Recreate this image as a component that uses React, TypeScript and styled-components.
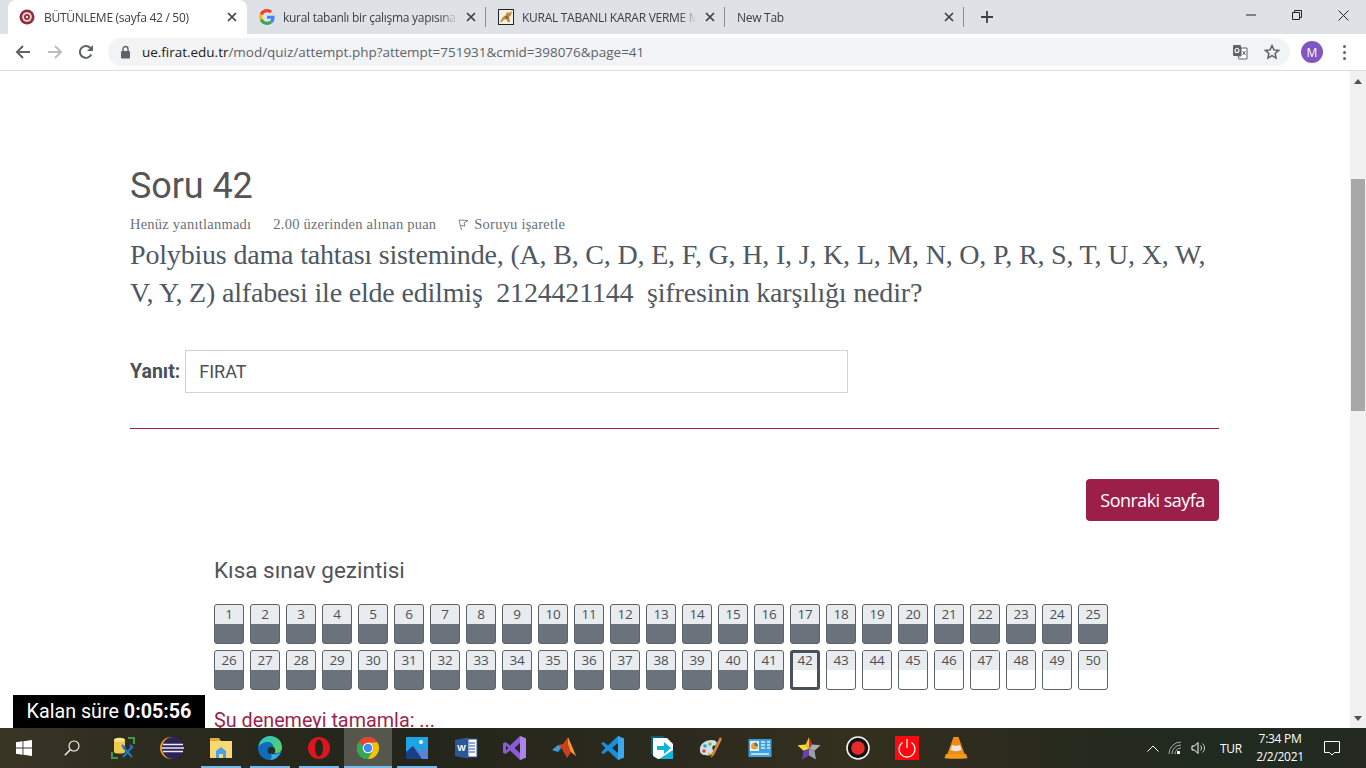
import React from "react";
import styled, { createGlobalStyle } from "styled-components";

const Global = createGlobalStyle`
  html, body { margin: 0; padding: 0; overflow: hidden; background: #fff; }
  * { box-sizing: border-box; }
`;

const Screen = styled.div`
  width: 1366px; height: 768px; display: flex; flex-direction: column; overflow: hidden; position: relative;
  font-family: "Roboto", "Liberation Sans", sans-serif;
`;

/* ---------- Chrome ---------- */
const TabStrip = styled.div`
  height: 34px; flex: none; background: #dee1e6; display: flex; align-items: stretch; padding-left: 8px; position: relative;
`;
const Tab = styled.div<{ $active?: boolean; $sep?: boolean }>`
  width: 239px; flex: none; display: flex; align-items: center; padding: 0 10.5px 0 12px; gap: 8px; position: relative;
  background: ${p => (p.$active ? "#fff" : "transparent")};
  border-radius: ${p => (p.$active ? "8px 8px 0 0" : "0")};
  &::after {
    content: ""; display: ${p => (p.$sep ? "block" : "none")};
    position: absolute; right: 0; top: 7px; height: 20px; width: 1px; background: #8a8d91;
  }
`;
const TabTitle = styled.span`
  flex: 1; min-width: 0; white-space: nowrap; overflow: hidden;
  font: 12px "Open Sans", "Liberation Sans", sans-serif; letter-spacing: -0.28px; color: #3c4043;
  -webkit-mask-image: linear-gradient(to right, #000 90%, transparent 100%);
  mask-image: linear-gradient(to right, #000 90%, transparent 100%);
`;
const Plus = styled.div`
  width: 22px; height: 34px; margin-left: 12px; display: flex; align-items: center; justify-content: center;
`;
const WinControls = styled.div`
  margin-left: auto; display: flex; height: 34px;
`;
const WinBtn = styled.div`
  width: 46px; height: 30px; display: flex; align-items: center; justify-content: center;
`;
const Toolbar = styled.div`
  height: 37px; flex: none; background: #fff; border-bottom: 1px solid #dadce0; display: flex; align-items: flex-start; padding-top: 4px;
`;
const NavIcons = styled.div`
  width: 108px; height: 28px; flex: none; display: flex; align-items: center; padding-left: 15px; gap: 15.5px;
`;
const Omnibox = styled.div`
  width: 1182px; height: 28px; flex: none; background: #f1f3f4; border-radius: 14px; display: flex; align-items: center; padding: 0 10px 0 12px;
`;
const UrlText = styled.span`
  margin-left: 11px; font: 13.5px "Open Sans", "Liberation Sans", sans-serif; letter-spacing: -0.02px; color: #5f6368; white-space: nowrap;
  b { font-weight: 400; color: #202124; }
`;
const OmniRight = styled.div`
  margin-left: auto; display: flex; align-items: center; gap: 16px;
`;
const Avatar = styled.div`
  width: 22px; height: 22px; border-radius: 50%; background: #7e57c2; color: #fff; margin-left: 11px; margin-top: 3px; flex: none;
  display: flex; align-items: center; justify-content: center; font: 12px "Open Sans", sans-serif;
`;
const Kebab = styled.div`
  margin-left: 20px; margin-top: 7px; display: flex; flex-direction: column; gap: 3px;
  i { display: block; width: 3px; height: 3px; border-radius: 50%; background: #5f6368; }
`;

/* ---------- Page ---------- */
const Body = styled.div`
  flex: 1; min-height: 0; display: flex; overflow: hidden;
`;
const Page = styled.main`
  flex: 1; min-width: 0; overflow: hidden; padding: 0 131px 0 130px; background: #fff;
`;
const Title = styled.h2`
  margin: 92px 0 0; font: 400 36px/46px "Roboto", "Liberation Sans", sans-serif; color: #555557; letter-spacing: -0.1px;
`;
const Meta = styled.div`
  margin-top: 7px; display: flex; height: 16px; align-items: center; font: 14.5px/16px "Liberation Serif", serif; letter-spacing: 0.23px; color: #6a7079; white-space: nowrap;
`;
const MetaItem = styled.span`
  margin-right: 22px; display: inline-flex; align-items: center; gap: 5px;
`;
const Question = styled.p`
  margin: 4px 0 0; font: 28px/38px "Liberation Serif", serif; letter-spacing: -0.18px; color: #4e5862; white-space: pre-wrap;
`;
const AnswerRow = styled.div`
  margin-top: 38px; display: flex; align-items: center; gap: 5px;
`;
const AnswerLabel = styled.label`
  font: 700 19.5px "Roboto", "Liberation Sans", sans-serif; color: #495057;
`;
const AnswerBox = styled.div`
  width: 663px; height: 43px; border: 1px solid #ced4da; background: #fff; padding-left: 13px; display: flex; align-items: center;
  font: 18px "Roboto", "Liberation Sans", sans-serif; color: #495057;
`;
const Rule = styled.div`
  margin-top: 35px; height: 1px; background: #9c1f4a;
`;
const ButtonRow = styled.div`
  margin-top: 50px; display: flex; justify-content: flex-end;
`;
const NextButton = styled.div`
  width: 133px; height: 42px; border-radius: 4px; background: #9c1f4a; color: #fff; display: flex; align-items: center; justify-content: center;
  font: 18px "Open Sans", "Lato", sans-serif; letter-spacing: -0.55px;
`;
const NavBlock = styled.section`
  margin: 34px 0 0 84px;
`;
const NavTitle = styled.h3`
  margin: 0; font: 400 22.5px/30px "Roboto", "Liberation Sans", sans-serif; color: #505459;
`;
const NavGrid = styled.div`
  margin-top: 19px; display: grid; grid-template-columns: repeat(25, 30px); grid-auto-rows: 40px; gap: 6px;
`;
const NavCell = styled.div<{ $done: boolean; $current: boolean }>`
  border: ${p => (p.$current ? "3px solid #495057" : "1px solid #5b636b")};
  border-radius: 3px; overflow: hidden; display: flex; flex-direction: column;
  background: ${p => (p.$done ? "#6a737b" : "#fff")};
  span {
    display: block; flex: none; height: ${p => (p.$current ? "17px" : "19px")}; background: #e9ecef; color: #495057;
    text-align: center; font: 13.5px/${p => (p.$current ? "15px" : "18px")} "Open Sans", sans-serif; letter-spacing: -0.2px;
  }
`;
const FinishLink = styled.div`
  margin-top: 18px; font: 19.8px/26px "Roboto", "Liberation Sans", sans-serif; color: #9c1f4a; white-space: nowrap;
`;
const Timer = styled.div`
  position: absolute; left: 13px; top: 695px; width: 192px; height: 33px; background: #000; color: #fff;
  display: flex; align-items: center; justify-content: center; gap: 5px; font: 19.7px "Roboto", "Liberation Sans", sans-serif;
  b { font-weight: 700; }
`;
const Scrollbar = styled.div`
  width: 16px; flex: none; background: #f1f1f1; display: flex; flex-direction: column;
`;
const ScrollArrow = styled.div`
  height: 20px; flex: none; display: flex; align-items: center; justify-content: center;
`;
const ScrollThumb = styled.div`
  height: 232px; margin: 88px 1px auto; background: #a8a8a8;
`;

/* ---------- Taskbar ---------- */
const Taskbar = styled.footer`
  height: 40px; flex: none; display: flex; align-items: stretch; color: #fff;
  background: linear-gradient(90deg, #3a3626 0%, #2b2a1e 12%, #24261b 30%, #2c2a1e 50%, #34301f 62%, #2a2a1e 75%, #202a1f 88%, #242a22 100%);
`;
const SysSlot = styled.div`
  width: 48px; flex: none; display: flex; align-items: center; justify-content: center;
`;
const AppList = styled.div`
  margin-left: 3px; display: flex; gap: 1px;
`;
const AppSlot = styled.div<{ $run?: boolean; $active?: boolean }>`
  width: 48px; height: 40px; flex: none; display: flex; align-items: center; justify-content: center; position: relative;
  background: ${p => (p.$active ? "#55574c" : "transparent")};
  &::after {
    content: ""; position: absolute; height: 2px; bottom: 0;
    left: ${p => (p.$active ? "0" : "4px")}; right: ${p => (p.$active ? "0" : "4px")};
    background: ${p => (p.$run ? "#76b9ed" : "transparent")};
  }
`;
const Tray = styled.div`
  margin-left: auto; padding-right: 14px; display: flex; align-items: center; height: 40px; font: 12px "Open Sans", sans-serif; color: #fff;
`;
const TrayIcon = styled.div<{ $w: number }>`
  width: ${p => p.$w}px; flex: none; display: flex; align-items: center; justify-content: center;
`;
const TrayLang = styled.span`
  width: 34px; text-align: center; letter-spacing: -0.3px;
`;
const Clock = styled.div`
  width: 64px; text-align: center; line-height: 18px; letter-spacing: -0.3px; font-size: 12px;
`;

/* ---------- Icons ---------- */
const CloseX = () => (
  <svg width="10" height="10" viewBox="0 0 10 10" style={{ flex: "none" }}><path d="M1 1l8 8M9 1l-8 8" stroke="#3c4043" strokeWidth="1.7" /></svg>
);
const FiratIcon = () => (
  <svg width="16" height="16" viewBox="0 0 16 16" style={{ flex: "none", marginLeft: -1, marginRight: 1 }}>
    <circle cx="8" cy="8" r="7.5" fill="#8f2f3a" /><circle cx="8" cy="8" r="4.8" fill="#e9dcdc" /><circle cx="8" cy="8" r="3" fill="#a02a35" /><circle cx="8" cy="8" r="1.2" fill="#f3e7e7" />
  </svg>
);
const GoogleIcon = () => (
  <svg width="16" height="16" viewBox="0 0 48 48" style={{ flex: "none" }}>
    <path fill="#EA4335" d="M24 9.5c3.5 0 6.7 1.3 9.1 3.5l6.8-6.8C35.8 2.4 30.2 0 24 0 14.6 0 6.5 5.4 2.6 13.2l7.9 6.2C12.4 13.6 17.7 9.5 24 9.5z" />
    <path fill="#4285F4" d="M46.9 24.5c0-1.6-.1-3.1-.4-4.5H24v9h12.9c-.6 3-2.2 5.5-4.7 7.2l7.7 6c4.5-4.2 7-10.3 7-17.7z" />
    <path fill="#FBBC05" d="M10.5 28.6c-.5-1.4-.8-3-.8-4.6s.3-3.2.8-4.6l-7.9-6.2C.9 16.5 0 20.1 0 24s.9 7.5 2.6 10.8l7.9-6.2z" />
    <path fill="#34A853" d="M24 48c6.5 0 11.9-2.1 15.9-5.8l-7.7-6c-2.2 1.5-4.9 2.3-8.2 2.3-6.3 0-11.6-4.2-13.5-9.9l-7.9 6.2C6.5 42.6 14.6 48 24 48z" />
  </svg>
);
const KuralIcon = () => (
  <svg width="16" height="16" viewBox="0 0 16 16" style={{ flex: "none" }}>
    <rect x=".5" y=".5" width="15" height="15" fill="#f4efe2" stroke="#222" />
    <path d="M2 13l3-5 3-2 1-3 2 1 3-2-1 4-2 2 1 5h-2l-2-3-3 1-1 2z" fill="#b58a3c" />
    <path d="M7 7l3 1-1 2z" fill="#6b4a1c" />
  </svg>
);
const IconBack = ({ c }: { c: string }) => (
  <svg width="16" height="16" viewBox="0 0 16 16"><path d="M15 8H2.5M8 2L2 8l6 6" fill="none" stroke={c} strokeWidth="2" /></svg>
);
const IconForward = ({ c }: { c: string }) => (
  <svg width="16" height="16" viewBox="0 0 16 16"><path d="M1 8h12.5M8 2l6 6-6 6" fill="none" stroke={c} strokeWidth="2" /></svg>
);
const IconReload = () => (
  <svg width="16" height="16" viewBox="0 0 16 16"><path d="M13.3 10.5A6 6 0 1 1 12.3 3.8L14 5.5" fill="none" stroke="#5f6368" strokeWidth="2" /><path d="M15 1v6H9z" fill="#5f6368" /></svg>
);
const IconLock = () => (
  <svg width="11" height="14" viewBox="0 0 11 14"><path d="M3 6V4a2.5 2.5 0 0 1 5 0v2" fill="none" stroke="#5f6368" strokeWidth="1.4" /><rect x="1" y="6" width="9" height="7.5" rx="1" fill="#5f6368" /></svg>
);
const IconTranslate = () => (
  <svg width="16" height="16" viewBox="0 0 16 16">
    <rect x="1" y="1" width="8" height="11" rx="1" fill="#5f6368" />
    <path d="M9 4h6v11H7l-1-3h3z" fill="#fff" stroke="#5f6368" />
    <circle cx="5" cy="6.500" r="2" fill="none" stroke="#fff" strokeWidth="1.100" />
    <path d="M10.500 7l3 4M13.500 7l-3 4" stroke="#5f6368" />
  </svg>
);
const IconStar = () => (
  <svg width="16" height="16" viewBox="0 0 16 16"><path d="M8 1.600l1.900 4.300 4.700.5-3.500 3.100 1 4.600L8 11.700l-4.100 2.400 1-4.600L1.400 6.400l4.700-.5z" fill="none" stroke="#5f6368" strokeWidth="1.500" /></svg>
);
const FlagIcon = () => (
  <svg width="11" height="14" viewBox="0 0 11 14"><path d="M3.500 13L1 3l9 .5L6 6l1 3-4-.5" fill="none" stroke="#777" strokeWidth=".9" /></svg>
);
const Tri = ({ down }: { down?: boolean }) => (
  <svg width="8" height="5" viewBox="0 0 8 5"><path d={down ? "M0 0h8L4 5z" : "M4 0l4 5H0z"} fill="#505050" /></svg>
);

const S = 24;
const Win = () => (
  <svg width="16" height="16" viewBox="0 0 16 16"><path d="M0 2.200l6.500-.9v6.200H0zM7.400 1.200L16 0v7.500H7.400zM0 8.400h6.500v6.300L0 13.800zM7.400 8.400H16V16l-8.600-1.200z" fill="#fff" /></svg>
);
const Search = () => (
  <svg width="16" height="16" viewBox="0 0 16 16"><circle cx="10" cy="6" r="5" fill="none" stroke="#fff" strokeWidth="1.100" /><path d="M6.300 9.700L.8 15.200" stroke="#fff" strokeWidth="1.300" /></svg>
);
const apps: { key: string; run?: boolean; active?: boolean; icon: React.ReactNode }[] = [
  { key: "dbtools", icon: (
    <svg width={S} height={S} viewBox="0 0 24 24">
      <path d="M1 16v6h6M17 2h6v6" fill="none" stroke="#3f9a45" strokeWidth="2" />
      <path d="M3 4c0-3 11-3 11 0v12c0 2-11 2-11 0z" fill="#f0c94e" /><ellipse cx="8.500" cy="4" rx="5.500" ry="2" fill="#f8e48c" />
      <path d="M12 11l9 10M21 11l-9 10" stroke="#1d77c4" strokeWidth="2.200" /><path d="M19 9l3 3M11 9l3 3" stroke="#1d77c4" strokeWidth="2" />
    </svg>) },
  { key: "eclipse", icon: (
    <svg width={S} height={S} viewBox="0 0 24 24">
      <circle cx="11" cy="12" r="11" fill="#f39a1e" /><circle cx="13" cy="12" r="11" fill="#2b2457" />
      <path d="M3 8.500h20M2 12h22M3 15.500h20" stroke="#efeaf7" strokeWidth="1.500" />
    </svg>) },
  { key: "folder", run: true, icon: (
    <svg width={S} height={S} viewBox="0 0 24 24">
      <path d="M1 2h9l2 3H1z" fill="#e7a93c" /><path d="M1 5h22v17H1z" fill="#f8d775" />
      <path d="M7 15l5-4 5 4v7h-3v-4h-4v4H7z" fill="#4aa0e6" />
    </svg>) },
  { key: "edge", run: true, icon: (
    <svg width={S} height={S} viewBox="0 0 24 24">
      <defs><linearGradient id="edgeA" x1="0" y1="0" x2="1" y2="1"><stop offset="0" stopColor="#2bc4c4" /><stop offset="1" stopColor="#5bd35a" /></linearGradient></defs>
      <circle cx="12" cy="12" r="12" fill="#0f6cbd" />
      <path d="M0.500 11C1.500 4 7 0 12 0c7 0 12 5 12 11.500 0 3.500-3 5.500-6 5.500-2.500 0-4.500-1-4.500-2.500 1.500-.5 2-1.500 2-3C15.500 8 13 6 10 6 5.500 6 2 8 .5 11z" fill="url(#edgeA)" />
      <circle cx="13.500" cy="14.500" r="3.800" fill="#262a1e" opacity=".95" />
      <path d="M13 17.500c2 1.500 6 1.500 9.500-1.500-2 5-6 8-10.500 8 2-1 2-4 1-6.500z" fill="#36b0e0" />
    </svg>) },
  { key: "opera", run: true, icon: (
    <svg width={S} height={S} viewBox="0 0 24 24"><path fillRule="evenodd" d="M12 1c6.500 0 11 5 11 11s-4.500 11-11 11S1 18 1 12 5.500 1 12 1zm0 2.500c-2.500 0-4 3.800-4 8.500s1.500 8.500 4 8.500 4-3.800 4-8.500-1.500-8.500-4-8.500z" fill="#e0141e" /></svg>) },
  { key: "chrome", run: true, active: true, icon: (
    <svg width={S} height={S} viewBox="0 0 24 24">
      <circle cx="12" cy="12" r="11" fill="#34a853" />
      <path d="M12 1a11 11 0 0 1 9.530 5.500H12A5.500 5.500 0 0 0 7.240 9.250L2.470 6.500A11 11 0 0 1 12 1z" fill="#ea4335" />
      <path d="M21.530 6.500A11 11 0 0 1 12 23l4.760-8.250A5.500 5.500 0 0 0 16.760 9.250L12 6.500z" fill="#fbbc05" />
      <path d="M2.470 6.500l4.770 8.250A5.500 5.500 0 0 0 12 17.500L9 23A11 11 0 0 1 2.470 6.500z" fill="#34a853" />
      <circle cx="12" cy="12" r="5.300" fill="#fff" /><circle cx="12" cy="12" r="4.200" fill="#4285f4" />
    </svg>) },
  { key: "photos", run: true, icon: (
    <svg width={S} height={S} viewBox="0 0 24 24">
      <rect x="1" y="1" width="22" height="22" fill="#19a5e6" /><circle cx="16" cy="6" r="2" fill="#fff" />
      <path d="M1 17l7-8 6 6 4-3 5 4v7H1z" fill="#5a83d4" /><path d="M1 23v-7l7-6 9 13z" fill="#1a3f85" />
    </svg>) },
  { key: "word", icon: (
    <svg width={S} height={S} viewBox="0 0 24 24">
      <path d="M14 3h9v18h-9z" fill="#fff" stroke="#2b579a" /><path d="M15 7h6M15 10h6M15 13h6M15 16h6" stroke="#2b579a" strokeWidth="1.200" />
      <path d="M1 4l13-2.500v21L1 20z" fill="#2b579a" />
      <text x="7.500" y="15" fontFamily="Liberation Sans, sans-serif" fontSize="9" fontWeight="700" fill="#fff" textAnchor="middle">W</text>
    </svg>) },
  { key: "vs", icon: (
    <svg width={S} height={S} viewBox="0 0 24 24"><path fillRule="evenodd" d="M17 0l6 2.500v19L17 24 7 14.500 2.500 18 0 16.500v-9L2.500 6 7 9.500zM17 7l-5.500 5 5.500 5zM3 9.500v5l2.500-2.500z" fill="#8a5bd6" /><path d="M17 0l6 2.500v19L17 24z" fill="#ab84e8" /></svg>) },
  { key: "matlab", icon: (
    <svg width={S} height={S} viewBox="0 0 24 24">
      <path d="M0 14l6-5 4 2-4 5z" fill="#3d9bd6" /><path d="M6 9l5-1 5-7 8 19-5-4-4 6-5-9z" fill="#c8401f" />
      <path d="M16 1l8 19-5-4-3-8z" fill="#ee9a3b" />
    </svg>) },
  { key: "vscode", icon: (
    <svg width={S} height={S} viewBox="0 0 24 24"><path d="M17 0l6 2.500v19L17 24 7 14.500 2.500 18 0 16.500 4.500 12 0 7.500 2.500 6 7 9.500zM17 7l-6 5 6 5z" fill="#1b8fdc" fillRule="evenodd" /><path d="M17 0l6 2.500v19L17 24z" fill="#3ca7ea" /></svg>) },
  { key: "send", icon: (
    <svg width={S} height={S} viewBox="0 0 24 24">
      <path d="M1 0h13l-1 4H5v16L1 18z" fill="#0b5d84" /><path d="M3 2h14l6 6v15H8l-5-3z" fill="#fff" />
      <path d="M9 23l14-9v9z" fill="#10b5dc" /><path d="M7 10h7V6l7 6-7 6v-4H7z" fill="#11b4d8" />
    </svg>) },
  { key: "paint", icon: (
    <svg width={S} height={S} viewBox="0 0 24 24">
      <path d="M1 15C0 8 6 4 13 4c4 0 6 3 4 5l-3 1c-2 2 1 4 0 6-1 3-5 4-8 3-3 0-5-2-5-4z" fill="#cfe0ea" />
      <circle cx="6" cy="10" r="1.800" fill="#3f9ad6" /><circle cx="11" cy="8" r="1.800" fill="#6fbf44" /><circle cx="5" cy="15" r="1.800" fill="#e0453a" /><circle cx="10" cy="18" r="1.500" fill="#e5b93c" />
      <path d="M21 1l2 2-8 16-3 3 .5-4z" fill="#d08a3a" />
    </svg>) },
  { key: "panel", icon: (
    <svg width={S} height={S} viewBox="0 0 24 24">
      <rect x="0.500" y="3" width="23" height="18" fill="#3d9fdd" /><rect x="2" y="5" width="9" height="10" fill="#e6f3fb" />
      <circle cx="6.500" cy="10" r="3.500" fill="#f0a030" /><path d="M6.500 10V6.500A3.500 3.500 0 0 1 10 10z" fill="#2b7fc0" />
      <path d="M13 6h4M13 9h4M13 12h4M19 6h3M19 9h3M19 12h3M3 18h18" stroke="#dff1fb" strokeWidth="1.300" />
    </svg>) },
  { key: "star", icon: (
    <svg width={S} height={S} viewBox="0 0 24 24">
      <path d="M12 1l-3.300 7.500L12 13z" fill="#f5c430" /><path d="M12 1l3.300 7.500L12 13z" fill="#c92f55" />
      <path d="M.5 9.300l8.200-.8L12 13l-5.500 1.700z" fill="#f8d542" /><path d="M23.500 9.300l-8.200-.8L12 13l5.500 1.700z" fill="#a9adb4" />
      <path d="M6.500 14.700L12 13v6.500L5 23.500z" fill="#6a3fb4" /><path d="M17.500 14.700L12 13v6.500l7 4z" fill="#9a9ea6" />
    </svg>) },
  { key: "record", icon: (
    <svg width={S} height={S} viewBox="0 0 24 24"><circle cx="12" cy="12" r="11" fill="#111" stroke="#f4f4f4" strokeWidth="1.600" /><circle cx="12" cy="12" r="6.800" fill="#e52b2b" /></svg>) },
  { key: "power", icon: (
    <svg width={S} height={S} viewBox="0 0 24 24"><rect width="24" height="24" fill="#fa0a0f" /><path d="M7.500 6.500a8 8 0 1 0 9 0" fill="none" stroke="#fff" strokeWidth="1.200" /><path d="M12 3v9" stroke="#fff" strokeWidth="1.200" /></svg>) },
  { key: "vlc", icon: (
    <svg width={S} height={S} viewBox="0 0 24 24">
      <path d="M9.500 1h5l6.500 18H3z" fill="#f28a12" /><path d="M8 9c2 1 6 1 8 0l1.500 5c-3 1.500-8 1.500-11 0z" fill="#e8e8e8" />
      <path d="M2 18h20l1.500 4c0 1-23 1-23 0z" fill="#f59a1c" />
    </svg>) },
];

const doneUpTo = 41;
const numbers = Array.from({ length: 50 }, (_, i) => i + 1);

export default function App() {
  return (
    <Screen>
      <Global />
      <TabStrip>
        <Tab $active><FiratIcon /><TabTitle>BÜTÜNLEME (sayfa 42 / 50)</TabTitle><CloseX /></Tab>
        <Tab $sep><GoogleIcon /><TabTitle>kural tabanlı bir çalışma yapısına</TabTitle><CloseX /></Tab>
        <Tab $sep><KuralIcon /><TabTitle>KURAL TABANLI KARAR VERME M</TabTitle><CloseX /></Tab>
        <Tab $sep><TabTitle>New Tab</TabTitle><CloseX /></Tab>
        <Plus>
          <svg width="12" height="12" viewBox="0 0 12 12"><path d="M6 0v12M0 6h12" stroke="#3c4043" strokeWidth="1.800" /></svg>
        </Plus>
        <WinControls>
          <WinBtn><svg width="10" height="2" viewBox="0 0 10 2"><path d="M0 1h10" stroke="#222" /></svg></WinBtn>
          <WinBtn><svg width="10" height="10" viewBox="0 0 10 10"><path d="M.5 2.500h7v7h-7zM2.500 2.500v-2h7v7h-2" fill="none" stroke="#222" /></svg></WinBtn>
          <WinBtn><svg width="11" height="11" viewBox="0 0 11 11"><path d="M.5.500l10 10M10.500.500l-10 10" stroke="#222" /></svg></WinBtn>
        </WinControls>
      </TabStrip>
      <Toolbar>
        <NavIcons><IconBack c="#5f6368" /><IconForward c="#babcbe" /><IconReload /></NavIcons>
        <Omnibox>
          <IconLock />
          <UrlText><b>ue.firat.edu.tr</b>/mod/quiz/attempt.php?attempt=751931&amp;cmid=398076&amp;page=41</UrlText>
          <OmniRight><IconTranslate /><IconStar /></OmniRight>
        </Omnibox>
        <Avatar>M</Avatar>
        <Kebab><i /><i /><i /></Kebab>
      </Toolbar>
      <Body>
        <Page>
          <Title>Soru 42</Title>
          <Meta>
            <MetaItem>Henüz yanıtlanmadı</MetaItem>
            <MetaItem>2.00 üzerinden alınan puan</MetaItem>
            <MetaItem><FlagIcon />Soruyu işaretle</MetaItem>
          </Meta>
          <Question>{"Polybius dama tahtası sisteminde, (A, B, C, D, E, F, G, H, I, J, K, L, M, N, O, P, R, S, T, U, X, W, V, Y, Z) alfabesi ile elde edilmiş  2124421144  şifresinin karşılığı nedir?"}</Question>
          <AnswerRow>
            <AnswerLabel>Yanıt:</AnswerLabel>
            <AnswerBox>FIRAT</AnswerBox>
          </AnswerRow>
          <Rule />
          <ButtonRow><NextButton>Sonraki sayfa</NextButton></ButtonRow>
          <NavBlock>
            <NavTitle>Kısa sınav gezintisi</NavTitle>
            <NavGrid>
              {numbers.map(n => (
                <NavCell key={n} $done={n <= doneUpTo} $current={n === 42}><span>{n}</span></NavCell>
              ))}
            </NavGrid>
            <FinishLink>Şu denemeyi tamamla: ...</FinishLink>
          </NavBlock>
        </Page>
        <Scrollbar>
          <ScrollArrow><Tri /></ScrollArrow>
          <ScrollThumb />
          <ScrollArrow><Tri down /></ScrollArrow>
        </Scrollbar>
      </Body>
      <Timer><span>Kalan süre</span><b>0:05:56</b></Timer>
      <Taskbar>
        <SysSlot><Win /></SysSlot>
        <SysSlot><Search /></SysSlot>
        <AppList>
          {apps.map(a => (
            <AppSlot key={a.key} $run={a.run} $active={a.active}>{a.icon}</AppSlot>
          ))}
        </AppList>
        <Tray>
          <TrayIcon $w={26}><svg width="12" height="7" viewBox="0 0 12 7"><path d="M.5 6.500L6 1l5.500 5.500" fill="none" stroke="#fff" /></svg></TrayIcon>
          <TrayIcon $w={18}><svg width="14" height="14" viewBox="0 0 14 14"><path d="M1 13a12 12 0 0 1 12-12M4 13a9 9 0 0 1 9-9M7 13a6 6 0 0 1 6-6" fill="none" stroke="#aaa" /><rect x="9" y="10" width="3" height="3" fill="#fff" /></svg></TrayIcon>
          <TrayIcon $w={30}><svg width="16" height="14" viewBox="0 0 16 14"><path d="M1 5h2.500L7 1.500v11L3.500 9H1z" fill="none" stroke="#fff" /><path d="M9.500 4.500a3.500 3.500 0 0 1 0 5M11.500 2.500a6 6 0 0 1 0 9" fill="none" stroke="#ccc" /></svg></TrayIcon>
          <TrayLang>TUR</TrayLang>
          <Clock>7:34 PM<br />2/2/2021</Clock>
          <TrayIcon $w={40}><svg width="16" height="16" viewBox="0 0 16 16"><path d="M.5 1.500h15v11h-5L8 15l-2.500-2.500h-5z" fill="none" stroke="#fff" /></svg></TrayIcon>
        </Tray>
      </Taskbar>
    </Screen>
  );
}
